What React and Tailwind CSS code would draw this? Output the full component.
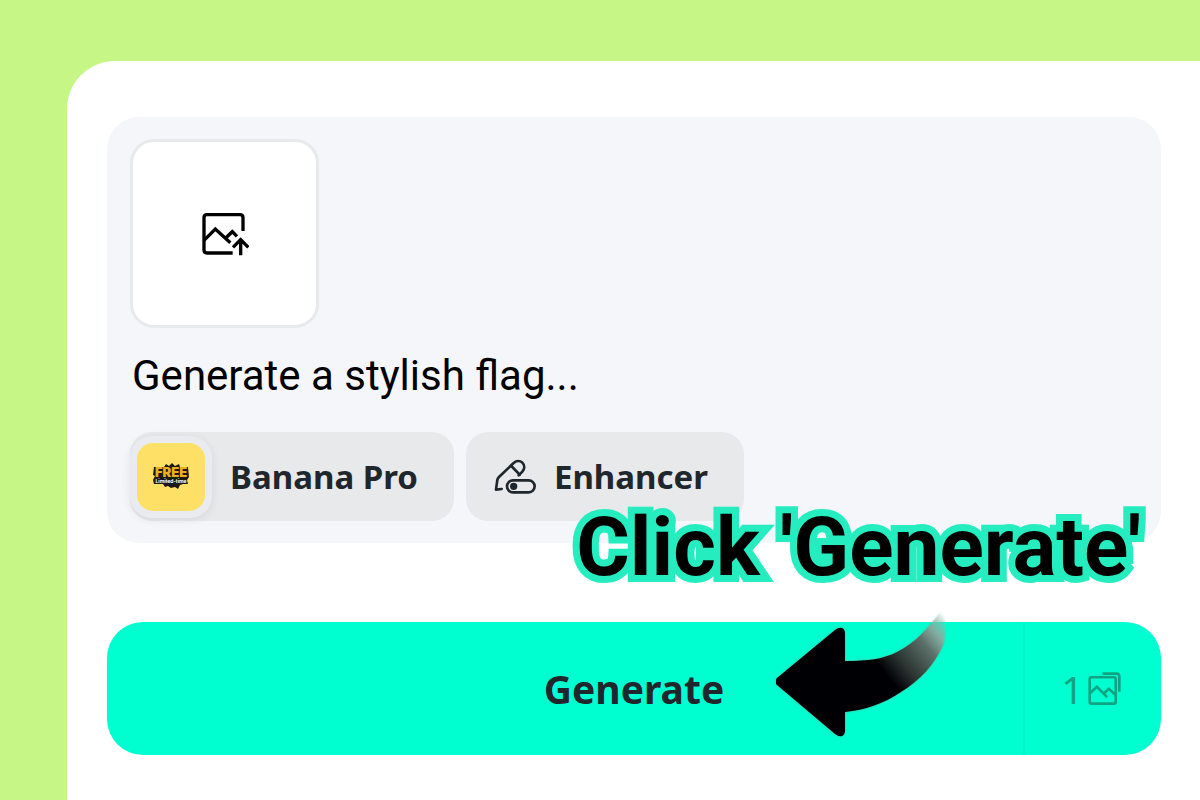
import { useState } from "react";

const UploadIcon = () => (
  <svg width="48" height="44" viewBox="36 36 144 132" fill="none" stroke="#000" strokeWidth="10" aria-hidden="true">
    <path d="M162 93V53q0-9-9-9H54q-9 0-9 9v97q0 9 9 9h77" />
    <path d="M45 121l34-34 45 41" />
    <path d="M110 114l20-19 14 14" />
    <path d="M155 166v-45M132 142l23-23 23 23" />
  </svg>
);

const EnhancerIcon = () => (
  <svg
    width="42"
    height="35"
    viewBox="28 32 126 105"
    fill="none"
    stroke="currentColor"
    strokeWidth="8"
    strokeLinecap="round"
    strokeLinejoin="round"
    aria-hidden="true"
  >
    <path d="M51 122l-17 2 4-29q1-5 5-9l43-41c8-9 20-9 27-2 8 8 7 19 0 27l-11 11" />
    <path d="M80 53l25 26" />
    <rect x="67" y="96" width="83" height="36" rx="18" />
    <circle cx="87" cy="114" r="7" fill="currentColor" />
  </svg>
);

const ImagesIcon = () => (
  <svg width="33" height="33" viewBox="230 184 100 100" fill="none" stroke="currentColor" strokeWidth="8" aria-hidden="true">
    <rect x="235" y="200" width="79" height="80" rx="6" />
    <path d="M274 189h42q9 0 9 9v46" />
    <path d="M235 249l22-20 31 31M277 250l16-15 20 18" />
  </svg>
);

const FreeBadge = () => (
  <svg width="38" height="28" viewBox="0 0 38 28" aria-hidden="true">
    <path
      d="M2 4h10l2-3 3 2 3-3 3 3 4-2 1 3h8l1 10-2 3 1 4h-5l-3 1-2 4-3-2-4 1-3-2-3 1-2-3H2l-1-4 2-4-2-1z"
      fill="#1b1a17"
    />
    <text x="19" y="14" textAnchor="middle" fontFamily="Inter, sans-serif" fontSize="13" fontWeight="900" fill="#e9b21b">
      FREE
    </text>
    <text x="19" y="20" textAnchor="middle" fontFamily="Inter, sans-serif" fontSize="5" fontWeight="700" fill="#fff">
      Limited-time
    </text>
  </svg>
);

const Arrow = () => (
  <svg
    width="172"
    height="128"
    viewBox="0 0 172 128"
    className="pointer-events-none absolute -top-3 right-[213px] drop-shadow-[0_0_1px_rgba(120,150,140,0.8)]"
    aria-hidden="true"
  >
    <defs>
      <linearGradient id="tail" gradientUnits="userSpaceOnUse" x1="108" y1="62" x2="172" y2="10">
        <stop offset="0" stopColor="#000004" />
        <stop offset="0.25" stopColor="#2b3532" />
        <stop offset="0.6" stopColor="#5c7069" />
        <stop offset="0.78" stopColor="#8aa89d" stopOpacity="0.85" />
        <stop offset="1" stopColor="#8fe0c8" stopOpacity="0" />
      </linearGradient>
    </defs>
    <path
      d="M1 68L59 20q4-3 7-2 3 1 3 6v27c24 0 38-2 52-9 18-9 31-23 46-44q4 17 1 35c-10 23-24 37-43 49-18 12-36 18-56 20v18q0 5-3 6-3 1-7-2L1 75q-3-3 0-7z"
      fill="url(#tail)"
    />
  </svg>
);

const App = () => {
  const [prompt, setPrompt] = useState("Generate a stylish flag...");

  return (
    <div className="flex min-h-screen bg-[#c6f786] pt-[61px] pl-[67px]">
      <main className="min-w-0 flex-1 rounded-tl-[48px] bg-white pt-14 pr-[39px] pb-11 pl-10 font-['Noto_Sans',sans-serif] text-[#1f262c]">
        <section className="rounded-[32px] bg-[#f5f6f9] px-[23px] py-[22px]">
          <button
            type="button"
            aria-label="Upload image"
            className="flex size-[189px] items-center justify-center rounded-3xl border-3 border-[#e8e9eb] bg-white"
          >
            <UploadIcon />
          </button>

          <input
            type="text"
            aria-label="Prompt"
            value={prompt}
            onChange={(e) => setPrompt(e.target.value)}
            className="mt-[23px] mb-[33px] block h-12 w-full bg-transparent pl-0.5 font-[Roboto,sans-serif] text-[42px] text-black outline-none"
          />

          <div className="flex gap-3 text-[33px] leading-none font-bold">
            <button type="button" className="flex h-[89px] items-center gap-[18px] rounded-[22px] bg-[#e8e9eb] pr-9">
              <span className="flex size-[82px] items-center justify-center rounded-[22px] bg-[#e9ebee] shadow-[0_2px_10px_rgba(0,0,0,0.08)]">
                <span className="flex size-[68px] items-center justify-center rounded-2xl bg-[#ffe066]">
                  <FreeBadge />
                </span>
              </span>
              Banana Pro
            </button>
            <button type="button" className="flex h-[89px] items-center gap-[18px] rounded-[22px] bg-[#e8e9eb] pr-9 pl-7">
              <EnhancerIcon />
              Enhancer
            </button>
          </div>
        </section>

        <div className="relative mt-[79px]">
          <button
            type="button"
            className="grid h-[133px] w-full grid-cols-[138px_1fr_138px] items-center rounded-[36px] bg-[#00ffd0] text-[39px] leading-none"
          >
            <span className="col-start-2 font-bold">Generate</span>
            <span className="flex h-full items-center justify-center gap-1 border-l-2 border-[#00f6c8] pr-1 text-[#0fa583]">
              1
              <ImagesIcon />
            </span>
          </button>

          {/* callout */}
          <p className="pointer-events-none absolute right-5 bottom-full mb-[34px] font-[Roboto,sans-serif] text-[82px] leading-none font-bold whitespace-nowrap text-black [-webkit-text-stroke:14px_#26edc0] [paint-order:stroke_fill]">
            Click 'Generate'
          </p>
          <Arrow />
        </div>
      </main>
    </div>
  );
};

export default App;
